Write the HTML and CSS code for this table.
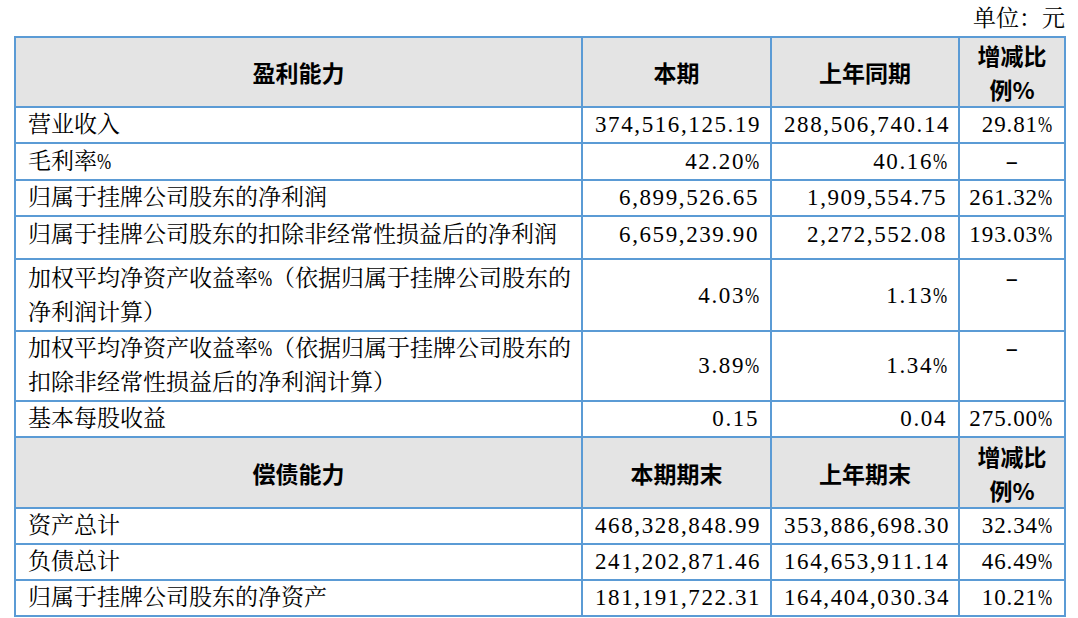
FILE: index.html
```html
<!DOCTYPE html>
<html>
<head>
<meta charset="utf-8">
<title>主要财务数据</title>
<link rel="stylesheet" href="styles.css">
</head>
<body>
<div class="page">
  <div class="unit">单位：元</div>
  <table class="fin">
    <colgroup>
      <col class="c-name">
      <col class="c-cur">
      <col class="c-prev">
      <col class="c-chg">
    </colgroup>
    <tr class="head">
      <th>盈利能力</th>
      <th>本期</th>
      <th>上年同期</th>
      <th>增减比例%</th>
    </tr>
    <tr>
      <td>营业收入</td>
      <td class="num">374,516,125.19</td>
      <td class="num">288,506,740.14</td>
      <td class="num chg">29.81<span class="pc">%</span></td>
    </tr>
    <tr class="gm">
      <td>毛利率<span class="pc">%</span></td>
      <td class="num">42.20<span class="pc">%</span></td>
      <td class="num">40.16<span class="pc">%</span></td>
      <td class="dash"><span class="dg">-</span></td>
    </tr>
    <tr>
      <td>归属于挂牌公司股东的净利润</td>
      <td class="num">6,899,526.65</td>
      <td class="num">1,909,554.75</td>
      <td class="num chg">261.32<span class="pc">%</span></td>
    </tr>
    <tr class="tall">
      <td>归属于挂牌公司股东的扣除非经常性损益后的净利润</td>
      <td class="num">6,659,239.90</td>
      <td class="num">2,272,552.08</td>
      <td class="num chg">193.03<span class="pc">%</span></td>
    </tr>
    <tr class="two first">
      <td><span class="ln">加权平均净资产收益率<span class="pc">%</span>（依据归属于挂牌公司股东的</span><br>净利润计算）</td>
      <td class="num">4.03<span class="pc">%</span></td>
      <td class="num">1.13<span class="pc">%</span></td>
      <td class="dash"><span class="dg">-</span></td>
    </tr>
    <tr class="two">
      <td><span class="ln">加权平均净资产收益率<span class="pc">%</span>（依据归属于挂牌公司股东的</span><br>扣除非经常性损益后的净利润计算）</td>
      <td class="num">3.89<span class="pc">%</span></td>
      <td class="num">1.34<span class="pc">%</span></td>
      <td class="dash"><span class="dg">-</span></td>
    </tr>
    <tr>
      <td>基本每股收益</td>
      <td class="num">0.15</td>
      <td class="num">0.04</td>
      <td class="num chg">275.00<span class="pc">%</span></td>
    </tr>
    <tr class="head head2">
      <th>偿债能力</th>
      <th>本期期末</th>
      <th>上年期末</th>
      <th>增减比例%</th>
    </tr>
    <tr>
      <td>资产总计</td>
      <td class="num">468,328,848.99</td>
      <td class="num">353,886,698.30</td>
      <td class="num chg">32.34<span class="pc">%</span></td>
    </tr>
    <tr>
      <td>负债总计</td>
      <td class="num">241,202,871.46</td>
      <td class="num">164,653,911.14</td>
      <td class="num chg">46.49<span class="pc">%</span></td>
    </tr>
    <tr>
      <td>归属于挂牌公司股东的净资产</td>
      <td class="num">181,191,722.31</td>
      <td class="num">164,404,030.34</td>
      <td class="num chg">10.21<span class="pc">%</span></td>
    </tr>
  </table>
</div>
</body>
</html>
```

FILE: styles.css
```css
html, body {
  margin: 0;
  padding: 0;
  background: #ffffff;
}

body {
  color: #000000;
  font-family: "Liberation Serif", "Noto Serif CJK SC", serif;
  font-size: 23px;
  font-weight: 400;
}

.page {
  padding: 2px 12px 0 14px;
}

.unit {
  text-align: right;
  line-height: 34px;
  padding-right: 1px;
}

.fin {
  border-collapse: collapse;
  table-layout: fixed;
  width: 1052px;
}

.c-name { width: 567px; }
.c-cur { width: 189px; }
.c-prev { width: 188px; }
.c-chg { width: 106px; }

.fin td,
.fin th {
  border: 2px solid #5b9bd5;
  padding: 0 12px;
  line-height: 34px;
  vertical-align: middle;
  text-align: left;
}

.fin .head th {
  background: #e4e4e4;
  font-family: "Noto Sans CJK SC", sans-serif;
  font-weight: 700;
  text-align: center;
  padding: 0 6px;
}

.fin .head2 th {
  padding-top: 1px;
}

.pc {
  display: inline-block;
  width: 14px;
  transform: scaleX(0.74);
  transform-origin: left center;
}

.fin td.num {
  text-align: right;
  letter-spacing: 1.6px;
  padding-right: 11px;
  white-space: nowrap;
}

.fin td.chg {
  letter-spacing: 0.9px;
  padding-left: 2px;
  padding-right: 12px;
}

.fin td.dash {
  text-align: center;
  vertical-align: top;
}

.dg {
  display: inline-block;
  transform: scaleX(1.7);
}

.fin .gm td {
  padding-top: 1px;
}

.fin .tall td {
  vertical-align: top;
  padding-top: 1px;
  padding-bottom: 6px;
}

.fin .first td {
  padding-top: 2px;
}

.ln {
  white-space: nowrap;
}
```
